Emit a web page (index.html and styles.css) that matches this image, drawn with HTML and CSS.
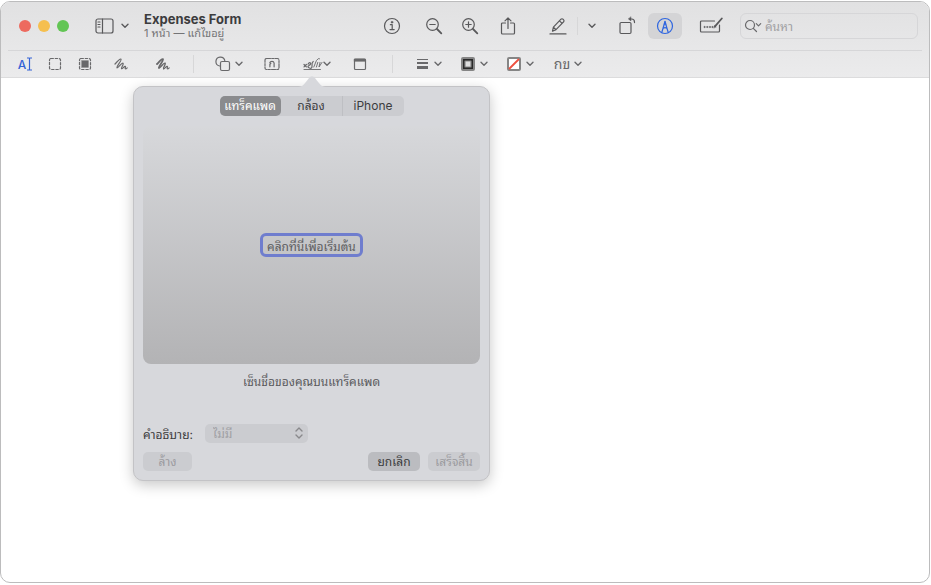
FILE: index.html
```html
<!DOCTYPE html>
<html lang="th">

<head>
    <meta charset="UTF-8">
    <meta name="viewport" content="width=device-width, initial-scale=1.0">
    <title>Expenses Form</title>
    <link rel="stylesheet" href="styles.css">
</head>

<body>
    <svg class="symbols" aria-hidden="true">
        <symbol id="chevron" viewBox="0 0 8 6">
            <path d="M1 1.3l3 3 3-3" />
        </symbol>
    </svg>
    <div class="window">
        <header>
            <div class="titlebar">
                <div class="lights">
                    <button class="light red" aria-label="ปิด"></button>
                    <button class="light yellow" aria-label="ย่อ"></button>
                    <button class="light green" aria-label="ขยาย"></button>
                </div>
                <button class="tool sidebar" aria-label="แถบด้านข้าง">
                    <svg width="20" height="16" viewBox="0 0 20 16">
                        <rect x="1" y="1" width="17" height="14" rx="2" />
                        <path d="M7.5 1v14M3 4h2M3 6.5h2M3 9h2" />
                    </svg>
                    <svg class="chevron" width="8" height="6"><use href="#chevron" /></svg>
                </button>
                <div class="title">
                    <h1>Expenses Form</h1>
                    <p>1 หน้า — แก้ไขอยู่</p>
                </div>
                <div class="actions">
                    <button class="tool" aria-label="ข้อมูล">
                        <svg width="18" height="18" viewBox="0 0 18 18">
                            <circle cx="9" cy="9" r="7.5" />
                            <path d="M7.4 7.7h1.8v4.8M7 12.6h4.2" />
                            <circle class="solid" cx="9" cy="5.2" r="1" />
                        </svg>
                    </button>
                    <button class="tool space-8" aria-label="ซูมออก">
                        <svg width="18" height="18" viewBox="0 0 18 18">
                            <circle cx="7.5" cy="7.5" r="5.8" />
                            <path d="M4.8 7.5h5.4" />
                            <path class="heavy" d="M12 12l4.3 4.3" />
                        </svg>
                    </button>
                    <button class="tool space-2" aria-label="ซูมเข้า">
                        <svg width="18" height="18" viewBox="0 0 18 18">
                            <circle cx="7.5" cy="7.5" r="5.8" />
                            <path d="M4.8 7.5h5.4M7.5 4.8v5.4" />
                            <path class="heavy" d="M12 12l4.3 4.3" />
                        </svg>
                    </button>
                    <button class="tool space-4" aria-label="แชร์">
                        <svg width="18" height="20" viewBox="0 0 18 20">
                            <path d="M6.5 7h-3a1 1 0 0 0-1 1v9a1 1 0 0 0 1 1h11a1 1 0 0 0 1-1V8a1 1 0 0 0-1-1h-3M9 12.5V2M6 4.8L9 1.8l3 3" />
                        </svg>
                    </button>
                    <button class="tool space-16" aria-label="ไฮไลท์">
                        <svg width="18" height="18" viewBox="0 0 18 18">
                            <path d="M3.5 14.2l.9-4L12 2.2a1.4 1.4 0 0 1 2 0l.6.6a1.4 1.4 0 0 1 0 2L7 12.7zM4.4 10.2L7 12.7M10.5 3.8l2.6 2.6M1 16.9h16" />
                        </svg>
                    </button>
                    <span class="divider space-2"></span>
                    <button class="tool narrow space-2" aria-label="สีไฮไลท์">
                        <svg class="chevron" width="8" height="6"><use href="#chevron" /></svg>
                    </button>
                    <button class="tool space-6" aria-label="หมุน">
                        <svg width="18" height="20" viewBox="0 0 18 20">
                            <rect x="2" y="6.5" width="11" height="11" rx="1.2" />
                            <path d="M12 3h1.5a3 3 0 0 1 3 3v.6" />
                            <path class="solid" d="M13 1v4l-2.6-2z" />
                        </svg>
                    </button>
                    <button class="tool active space-4" aria-label="ทำเครื่องหมาย" aria-pressed="true">
                        <svg width="18" height="18" viewBox="0 0 18 18">
                            <circle cx="9" cy="9" r="7.5" />
                            <path d="M5.8 15.5L8.4 6.5 9 4.5l.6 2 2.6 9M7.2 11.3q1.8-1.5 3.6 0" />
                            <path class="solid" d="M8.1 7.4L9 3.8l.9 3.6z" />
                        </svg>
                    </button>
                    <button class="tool space-12" aria-label="กรอกแบบฟอร์ม">
                        <svg width="24" height="18" viewBox="0 0 24 18">
                            <path d="M15.5 4H2.5a1 1 0 0 0-1 1v9a1 1 0 0 0 1 1h17a1 1 0 0 0 1-1V8" />
                            <path class="heavy" d="M22.8 1.5L16 9.3" />
                            <path class="solid" d="M14.8 10.8l.7-2.4 1.5 1.4z" />
                            <circle class="solid" cx="5.5" cy="10" r=".7" />
                            <circle class="solid" cx="8.2" cy="10" r=".7" />
                            <circle class="solid" cx="10.9" cy="10" r=".7" />
                            <circle class="solid" cx="13.4" cy="10" r=".7" />
                        </svg>
                    </button>
                    <label class="search space-12">
                        <svg width="18" height="14" viewBox="0 0 18 14">
                            <circle cx="6" cy="6" r="4.5" />
                            <path d="M9.3 9.3l3.2 3.2M12.3 4.6l2.2 2.2 2.2-2.2" />
                        </svg>
                        <input type="text" placeholder="ค้นหา" aria-label="ค้นหา">
                    </label>
                </div>
            </div>
            <div class="markup">
                <button class="tool small select-text" aria-label="เลือกข้อความ">
                    <span>A</span>
                    <svg width="5" height="14" viewBox="0 0 5 14">
                        <path d="M.5 1h1.3q.7 0 .7.8v10.4q0 .8-.7.8H.5M4.5 1H3.2q-.7 0-.7.8M4.5 13H3.2q-.7 0-.7-.8" />
                    </svg>
                </button>
                <button class="tool small space-6" aria-label="สี่เหลี่ยมเลือก">
                    <svg width="14" height="14" viewBox="0 0 14 14">
                        <rect x="1.5" y="1.5" width="11" height="11" rx="1.5" stroke-dasharray="2.4 1.8" />
                    </svg>
                </button>
                <button class="tool small space-6" aria-label="แก้ไขปกปิด">
                    <svg width="14" height="14" viewBox="0 0 14 14">
                        <rect x="1.5" y="1.5" width="11" height="11" rx="1.5" stroke-dasharray="2.4 1.8" />
                        <rect class="solid" x="3.6" y="3.6" width="6.8" height="6.8" />
                    </svg>
                </button>
                <button class="tool small space-12" aria-label="สเก็ตช์">
                    <svg width="14" height="14" viewBox="0 0 14 14">
                        <path d="M1 7C3 5 6 1.2 7 2.2C8 3.4 2 9.8 3 10.8C4 11.6 7.6 5.4 9 6.2C10.2 7.2 6.6 11 7.6 11.7C8.6 12.2 10 9 11.2 9.3C12.2 9.8 10.6 11.4 11.4 11.8Q12 12 13.2 10.8" />
                    </svg>
                </button>
                <button class="tool small space-18" aria-label="วาด">
                    <svg width="14" height="14" viewBox="0 0 14 14">
                        <path class="heavy" d="M1 7C3 5 6 1.2 7 2.2C8 3.4 2 9.8 3 10.8" />
                        <path class="bold" d="M3 10.8C4 11.6 7.6 5.4 9 6.2C10.2 7.2 6.6 11 7.6 11.7" />
                        <path d="M7.6 11.7C8.6 12.2 10 9 11.2 9.3C12.2 9.8 10.6 11.4 11.4 11.8Q12 12 13.2 10.8" />
                    </svg>
                </button>
                <span class="divider space-18"></span>
                <button class="tool small menu space-20" aria-label="รูปร่าง">
                    <svg width="16" height="16" viewBox="0 0 16 16">
                        <path d="M4.6 10A4.5 4.5 0 1 1 9.8 4.5" />
                        <rect x="5.5" y="5.5" width="9" height="9" rx="1.5" />
                    </svg>
                    <svg class="chevron" width="8" height="6"><use href="#chevron" /></svg>
                </button>
                <button class="tool small space-16" aria-label="ข้อความ">
                    <svg width="16" height="14" viewBox="0 0 16 14">
                        <rect x="1" y="1.5" width="14" height="11" rx="1.5" stroke-dasharray="4 1.2 2 1.2" />
                        <path d="M5.9 9.8V7.2l.9-.7-1-.9Q6.2 4.3 8 4.3t2.1 1.7v3.8" />
                    </svg>
                </button>
                <button class="tool small menu signature space-18" aria-label="เซ็นชื่อ">
                    <svg width="20" height="16" viewBox="0 0 20 16">
                        <path d="M1 8.5l2.4 2.4M3.4 8.5L1 10.9M5 8.2Q6.4 6 7.4 7T6 9.4 6.4 12 9 9.8 10.2 5.5" />
                        <path class="thin" d="M10.8 11L13.4 4.6Q15.4 1.6 16.6 2.6M13.4 11L14.8 6.4M17 6.4L16 11 19 6.4M1 13.5h16.5" />
                    </svg>
                    <svg class="chevron" width="8" height="6"><use href="#chevron" /></svg>
                </button>
                <button class="tool small space-16" aria-label="โน้ต">
                    <svg width="14" height="14" viewBox="0 0 14 14">
                        <rect x="1.5" y="2" width="11" height="10.5" rx="1" />
                        <path class="solid" d="M1.5 2h11v2.4h-11z" />
                    </svg>
                </button>
                <span class="divider space-20"></span>
                <button class="tool small menu space-20" aria-label="ลักษณะเส้น">
                    <svg width="16" height="14" viewBox="0 0 16 14">
                        <path class="fill" d="M3 2h11v1H3zM3 5h11v2H3zM3 9h11v3H3z" />
                    </svg>
                    <svg class="chevron" width="8" height="6"><use href="#chevron" /></svg>
                </button>
                <button class="tool small menu space-16" aria-label="สีเส้นขอบ">
                    <svg width="16" height="16" viewBox="0 0 16 16">
                        <rect x="2" y="2" width="12" height="12" rx="1" fill="#292929" stroke="#858585" stroke-width="2" />
                        <rect x="5" y="5" width="6" height="6" fill="#dedede" stroke="#858585" />
                    </svg>
                    <svg class="chevron" width="8" height="6"><use href="#chevron" /></svg>
                </button>
                <button class="tool small menu space-16" aria-label="สีเติม">
                    <svg width="16" height="16" viewBox="0 0 16 16">
                        <rect x="2" y="2" width="12" height="12" rx="1" fill="#fff" stroke="#858585" stroke-width="2" />
                        <path d="M3.5 12.5l9-9" stroke="#ef5140" stroke-width="1.8" />
                    </svg>
                    <svg class="chevron" width="8" height="6"><use href="#chevron" /></svg>
                </button>
                <button class="tool small menu text-style space-18" aria-label="ลักษณะข้อความ">
                    <span>กข</span>
                    <svg class="chevron" width="8" height="6"><use href="#chevron" /></svg>
                </button>
            </div>
        </header>
        <main>
            <section class="popover">
                <svg class="arrow" width="28" height="12" viewBox="0 0 28 12">
                    <path d="M0 12C5 11.5 6 9.5 11 3q3-3.5 6 0c5 6.5 6 8.5 11 9z" />
                </svg>
                <div class="tabs">
                    <button class="tab selected">แทร็คแพด</button>
                    <button class="tab">กล้อง</button>
                    <button class="tab phone">iPhone</button>
                </div>
                <div class="pad">
                    <button class="start">คลิกที่นี่เพื่อเริ่มต้น</button>
                </div>
                <p class="hint">เซ็นชื่อของคุณบนแทร็คแพด</p>
                <div class="description">
                    <label for="description">คำอธิบาย:</label>
                    <div class="select">
                        <select id="description" disabled>
                            <option>ไม่มี</option>
                        </select>
                        <svg width="10" height="14" viewBox="0 0 10 14">
                            <path d="M2 5l3-3 3 3M2 9l3 3 3-3" />
                        </svg>
                    </div>
                </div>
                <div class="buttons">
                    <button class="btn clear" disabled>ล้าง</button>
                    <button class="btn">ยกเลิก</button>
                    <button class="btn" disabled>เสร็จสิ้น</button>
                </div>
            </section>
        </main>
    </div>
</body>

</html>
```
FILE: styles.css
```css
* {
    box-sizing: border-box;
}

body {
    margin: 0;
    padding: 1px 1px 2px 0;
    height: 100vh;
    background-color: #fff;
    font-family: Inter, "Noto Sans Thai Looped", "Loma", "Noto Sans Thai", sans-serif;
    font-size: 12px;
    color: #3c3c3e;
}

h1,
p {
    margin: 0;
}

button,
input,
select {
    margin: 0;
    padding: 0;
    border: none;
    background: none;
    font: inherit;
    color: inherit;
}

svg {
    display: block;
    flex: none;
    fill: none;
    stroke: currentColor;
    stroke-width: 1.2;
    stroke-linecap: round;
    stroke-linejoin: round;
}

.symbols {
    position: absolute;
    width: 0;
    height: 0;
}

.thin {
    stroke-width: 0.9;
}

.bold {
    stroke-width: 1.5;
}

.heavy {
    stroke-width: 1.8;
}

.solid {
    fill: currentColor;
    stroke-width: 0.4;
}

.fill {
    fill: currentColor;
    stroke: none;
}

.chevron {
    stroke-width: 1.4;
}

.window {
    height: 100%;
    display: flex;
    flex-direction: column;
    border: 1px solid #bcbcbd;
    border-radius: 10px;
}

header {
    background: linear-gradient(#e1e1e2, #ebebec);
    border-bottom: 1px solid #dcdcdd;
    border-radius: 9px 9px 0 0;
}

.titlebar {
    display: flex;
    align-items: center;
    height: 49px;
    margin: 0 7px;
    padding: 0 4px 0 11px;
    border-bottom: 1px solid #d6d6d8;
}

.lights {
    display: flex;
    gap: 7px;
}

.light {
    width: 12px;
    height: 12px;
    border-radius: 50%;
}

.red {
    background-color: #ed6a5f;
}

.yellow {
    background-color: #f5bf4f;
}

.green {
    background-color: #62c554;
}

.tool {
    display: flex;
    flex: none;
    align-items: center;
    justify-content: center;
    width: 34px;
    height: 26px;
    border-radius: 6px;
    color: #59595b;
}

.tool.narrow {
    width: 24px;
}

.tool.sidebar {
    width: auto;
    gap: 6px;
    margin-left: 26px;
}

.tool.active {
    background-color: #d4d4d6;
    color: #2f66e0;
}

.title {
    flex: 1;
    margin-left: 15px;
    white-space: nowrap;
}

.title h1 {
    font-size: 13px;
    line-height: 14px;
    font-weight: 700;
}

.title p {
    font-size: 11px;
    line-height: 14px;
    color: #747476;
}

.actions {
    display: flex;
    align-items: center;
}

.divider {
    width: 1px;
    height: 18px;
    background-color: #d7d7d8;
}

.search {
    display: flex;
    align-items: center;
    gap: 3px;
    width: 178px;
    height: 26px;
    padding-left: 3px;
    border: 1px solid #d6d6d8;
    border-radius: 6px;
    color: #6a6a6c;
}

.search input {
    flex: 1;
    min-width: 0;
    outline: none;
}

.search input::placeholder {
    color: #a0a0a2;
    opacity: 1;
}

.markup {
    display: flex;
    align-items: center;
    height: 26px;
    padding-left: 12px;
}

.tool.small {
    width: 24px;
    height: 22px;
    color: #69696b;
}

.tool.menu {
    width: 30px;
    gap: 4px;
}

.tool.signature {
    gap: 0;
}

.tool.text-style {
    font-size: 14px;
    line-height: 18px;
}

.tool.select-text {
    gap: 1px;
    color: #3463d6;
    font-weight: 500;
}

.space-2 {
    margin-left: 2px;
}

.space-4 {
    margin-left: 4px;
}

.space-6 {
    margin-left: 6px;
}

.space-8 {
    margin-left: 8px;
}

.space-12 {
    margin-left: 12px;
}

.space-16 {
    margin-left: 16px;
}

.space-18 {
    margin-left: 18px;
}

.space-20 {
    margin-left: 20px;
}

main {
    flex: 1;
    position: relative;
}

.popover {
    position: absolute;
    top: 8px;
    left: 132px;
    width: 357px;
    padding: 9px;
    border: 1px solid #c3c3c6;
    border-radius: 10px;
    background-color: #d7d8dc;
    box-shadow: 0 4px 14px rgba(0, 0, 0, 0.22);
}

.arrow {
    position: absolute;
    top: -12px;
    left: 164px;
    fill: #d7d8dc;
    stroke: none;
}

.tabs {
    display: flex;
    width: 184px;
    height: 20px;
    margin: 0 auto;
    border-radius: 5px;
    background-color: #cbccd0;
}

.tab {
    flex: 1;
    border-radius: 5px;
    line-height: 18px;
}

.tab.selected {
    background-color: #8a8b8e;
    color: #fff;
}

.tab.phone {
    border-left: 1px solid #bebfc3;
    border-radius: 0;
}

.pad {
    display: flex;
    align-items: center;
    justify-content: center;
    height: 238px;
    margin-top: 10px;
    border-radius: 8px;
    background: linear-gradient(#d7d8db, #b3b3b5);
}

.start {
    height: 24px;
    padding: 2px 4px 0;
    border: 3px solid #6f7dce;
    border-radius: 6px;
    line-height: 18px;
    color: #5d5d5f;
}

.hint {
    margin-top: 8px;
    line-height: 20px;
    text-align: center;
    color: #5a5a5c;
}

.description {
    display: flex;
    align-items: center;
    gap: 12px;
    margin-top: 32px;
}

.select {
    position: relative;
    width: 103px;
    color: #89898c;
}

.select select {
    display: block;
    width: 100%;
    height: 19px;
    padding-left: 8px;
    border-radius: 5px;
    background-color: #cbccd0;
    color: #a0a0a4;
    appearance: none;
    opacity: 1;
}

.select svg {
    position: absolute;
    top: 2px;
    right: 4px;
    stroke-width: 1.4;
}

.buttons {
    display: flex;
    gap: 8px;
    margin-top: 9px;
}

.btn {
    width: 52px;
    height: 19px;
    border-radius: 5px;
    background-color: #bbbcc0;
    line-height: 18px;
    color: #3c3c3e;
}

.btn:disabled {
    background-color: #cbccd0;
    color: #9b9b9f;
}

.btn.clear {
    width: 49px;
    margin-right: auto;
}
```
